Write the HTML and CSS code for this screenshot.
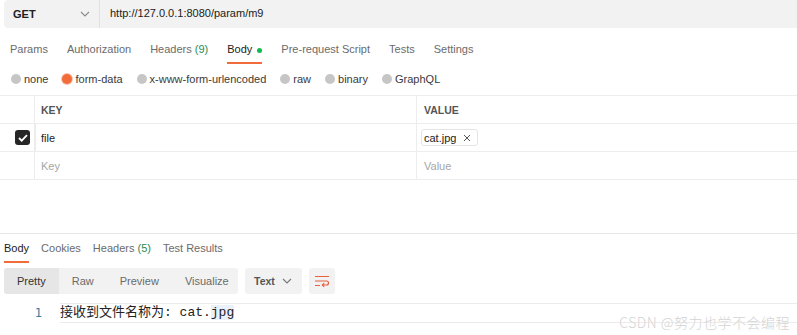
FILE: index.html
```html
<!DOCTYPE html>
<html lang="en">
<head>
    <meta charset="UTF-8">
    <title>Postman request</title>
    <link rel="stylesheet" href="styles.css">
</head>
<body>
    <div class="url-bar">
        <div class="method">
            <span>GET</span>
            <svg class="chev" width="10" height="6" viewBox="0 0 10 6"><path d="M1 1l4 4 4-4" fill="none" stroke="#8a8a8a" stroke-width="1.1"/></svg>
        </div>
        <div class="url">http://127.0.0.1:8080/param/m9</div>
    </div>

    <div class="tabs req-tabs">
        <span class="tab">Params</span>
        <span class="tab">Authorization</span>
        <span class="tab">Headers <em class="count">(9)</em></span>
        <span class="tab active">Body <i class="dot"></i></span>
        <span class="tab">Pre-request Script</span>
        <span class="tab">Tests</span>
        <span class="tab">Settings</span>
    </div>

    <div class="radios">
        <label class="radio"><i></i>none</label>
        <label class="radio on"><i></i>form-data</label>
        <label class="radio"><i></i>x-www-form-urlencoded</label>
        <label class="radio"><i></i>raw</label>
        <label class="radio"><i></i>binary</label>
        <label class="radio"><i></i>GraphQL</label>
    </div>

    <div class="kv">
        <div class="row head">
            <div class="c-check"></div>
            <div class="c-key">KEY</div>
            <div class="c-val">VALUE</div>
        </div>
        <div class="row">
            <div class="c-check"><span class="box"><svg width="10" height="8" viewBox="0 0 10 8"><path d="M1 4l2.7 2.7L9 1.2" fill="none" stroke="#fff" stroke-width="1.8"/></svg></span></div>
            <div class="c-key first">file</div>
            <div class="c-val">
                <span class="chip">cat.jpg <svg class="x" width="8" height="8" viewBox="0 0 8 8"><path d="M1 1l6 6M7 1L1 7" stroke="#555" stroke-width="1"/></svg></span>
            </div>
        </div>
        <div class="row">
            <div class="c-check"></div>
            <div class="c-key ph">Key</div>
            <div class="c-val ph">Value</div>
        </div>
    </div>

    <div class="response">
        <div class="tabs res-tabs">
            <span class="tab active">Body</span>
            <span class="tab">Cookies</span>
            <span class="tab">Headers <em class="count">(5)</em></span>
            <span class="tab">Test Results</span>
        </div>
        <div class="toolbar">
            <div class="seg">
                <span class="sel">Pretty</span>
                <span>Raw</span>
                <span>Preview</span>
                <span>Visualize</span>
            </div>
            <div class="drop">Text <svg width="10" height="6" viewBox="0 0 10 6"><path d="M1 1l4 4 4-4" fill="none" stroke="#777" stroke-width="1.1"/></svg></div>
            <div class="wrap-btn">
                <svg width="16" height="12" viewBox="0 0 16 12"><path d="M1 1.5h14M1 6h11.5a2 2 0 0 1 0 4H9M1 10.5h5" fill="none" stroke="#e8603c" stroke-width="1.2"/><path d="M10.2 8.2L8.3 10l1.9 1.8" fill="none" stroke="#e8603c" stroke-width="1.2"/></svg>
            </div>
        </div>
        <div class="code">
            <span class="ln">1</span>
            <span class="line">接收到文件名称为: cat.<span class="cur">jpg</span></span>
        </div>
        <div class="watermark">CSDN @努力也学不会编程</div>
    </div>
</body>
</html>
```

FILE: styles.css
```css
body {
    margin: 0;
    font-family: "Liberation Sans", Arial, "Noto Sans CJK SC", sans-serif;
    font-size: 11px;
    color: #212121;
    background: #fff;
    width: 797px;
    height: 335px;
    overflow: hidden;
}
.url-bar {
    display: flex;
    height: 28px;
    margin-left: 4px;
    background: #f2f2f2;
    border-radius: 4px 0 0 4px;
}
.method {
    width: 96px;
    display: flex;
    align-items: center;
    justify-content: space-between;
    padding: 0 9px;
    box-sizing: border-box;
    border-right: 1px solid #e2e2e2;
    font-weight: bold;
    font-size: 11px;
}
.url {
    padding-left: 10px;
    line-height: 26px;
    font-size: 11px;
    color: #212121;
}
.tabs {
    display: flex;
}
.tab {
    color: #6b6b6b;
    position: relative;
    font-size: 11px;
    line-height: 14px;
}
.tab .count {
    font-style: normal;
    color: #2c8a4f;
}
.tab.active {
    color: #212121;
}
.tab.active::after {
    content: "";
    position: absolute;
    left: 0;
    right: 0;
    bottom: -2px;
    height: 2px;
    background: #f26b3a;
}
.req-tabs {
    padding: 14px 0 0 10px;
    gap: 19px;
    height: 20px;
}
.dot {
    display: inline-block;
    width: 5px;
    height: 5px;
    border-radius: 50%;
    background: #0cbb52;
    vertical-align: middle;
    margin-left: 2px;
}
.radios {
    display: flex;
    gap: 14px;
    padding: 9px 0 0 11px;
    height: 24px;
    box-sizing: border-box;
    font-size: 11px;
}
.radio {
    display: flex;
    align-items: center;
    gap: 3px;
    color: #3a3a3a;
}
.radio i {
    width: 10px;
    height: 10px;
    border-radius: 50%;
    background: #c6c6c6;
}
.radio.on i {
    background: #f26b3a;
    box-shadow: 0 0 0 1px #f8c4b0;
}
.kv {
    margin-top: 9px;
    border-top: 1px solid #ededed;
}
.row {
    display: flex;
    height: 27px;
    border-bottom: 1px solid #ededed;
    align-items: stretch;
}
.c-check {
    width: 35px;
    border-right: 1px solid #ededed;
    display: flex;
    align-items: center;
    justify-content: flex-end;
    padding-right: 4px;
    box-sizing: border-box;
}
.c-key {
    width: 382px;
    border-right: 1px solid #ededed;
    padding-left: 6px;
    box-sizing: border-box;
    display: flex;
    align-items: center;
    font-size: 11px;
}
.c-key.first {
    border-left: 1px solid #fbe9c8;
    padding-left: 5px;
}
.c-val {
    padding-left: 4px;
    display: flex;
    align-items: center;
    font-size: 11px;
}
.head .c-key, .head .c-val {
    font-weight: bold;
    color: #555;
    font-size: 10.5px;
}
.head .c-val, .c-val.ph {
    padding-left: 7px;
}
.ph {
    color: #a6a6a6;
}
.box {
    width: 15px;
    height: 15px;
    border-radius: 3px;
    background: #262626;
    display: flex;
    align-items: center;
    justify-content: center;
}
.chip {
    display: flex;
    align-items: center;
    gap: 7px;
    height: 15px;
    border: 1px solid #e4e4e4;
    border-radius: 3px;
    padding: 0 6px 0 2px;
    font-size: 11px;
}
.response {
    margin-top: 53px;
    border-top: 1px solid #e6e6e6;
    position: relative;
    height: 101px;
}
.res-tabs {
    padding: 7px 0 0 4px;
    gap: 12px;
    height: 20px;
}
.toolbar {
    display: flex;
    gap: 7px;
    margin: 7px 0 0 4px;
    height: 26px;
}
.seg {
    display: flex;
    background: #f2f2f2;
    border-radius: 3px;
    width: 234px;
    font-size: 11px;
    color: #6b6b6b;
}
.seg span {
    display: flex;
    align-items: center;
    padding: 0 13px;
}
.seg .sel {
    background: #e6e6e6;
    color: #333;
    border-radius: 3px 0 0 3px;
    width: 55px;
    box-sizing: border-box;
    justify-content: center;
}
.drop {
    width: 57px;
    background: #f2f2f2;
    border-radius: 3px;
    display: flex;
    align-items: center;
    justify-content: space-between;
    padding: 0 10px 0 9px;
    box-sizing: border-box;
    font-size: 10.5px;
    font-weight: bold;
    color: #555;
}
.wrap-btn {
    width: 26px;
    background: #f2f2f2;
    border-radius: 3px;
    display: flex;
    align-items: center;
    justify-content: center;
}
.code {
    display: flex;
    align-items: center;
    margin-top: 9px;
    height: 20px;
}
.ln {
    width: 60px;
    text-align: right;
    color: #2f7fa3;
    font-family: "DejaVu Sans Mono", monospace;
    font-size: 12px;
    padding-right: 18px;
    box-sizing: border-box;
}
.line {
    flex: 1;
    height: 18px;
    line-height: 18px;
    border-top: 1px solid #ececec;
    border-bottom: 1px solid #ececec;
    font-family: "Liberation Mono", "Noto Sans CJK SC", monospace;
    font-size: 13px;
    color: #222;
}
.cur {
    background: #eaf1fb;
}
.watermark {
    position: absolute;
    right: 7px;
    bottom: 3px;
    font-size: 14px;
    letter-spacing: 0.5px;
    color: #d4d4d4;
    font-family: "Noto Sans CJK SC", sans-serif;
    font-weight: 300;
    text-shadow: 0 0 1px #fff;
}
```
